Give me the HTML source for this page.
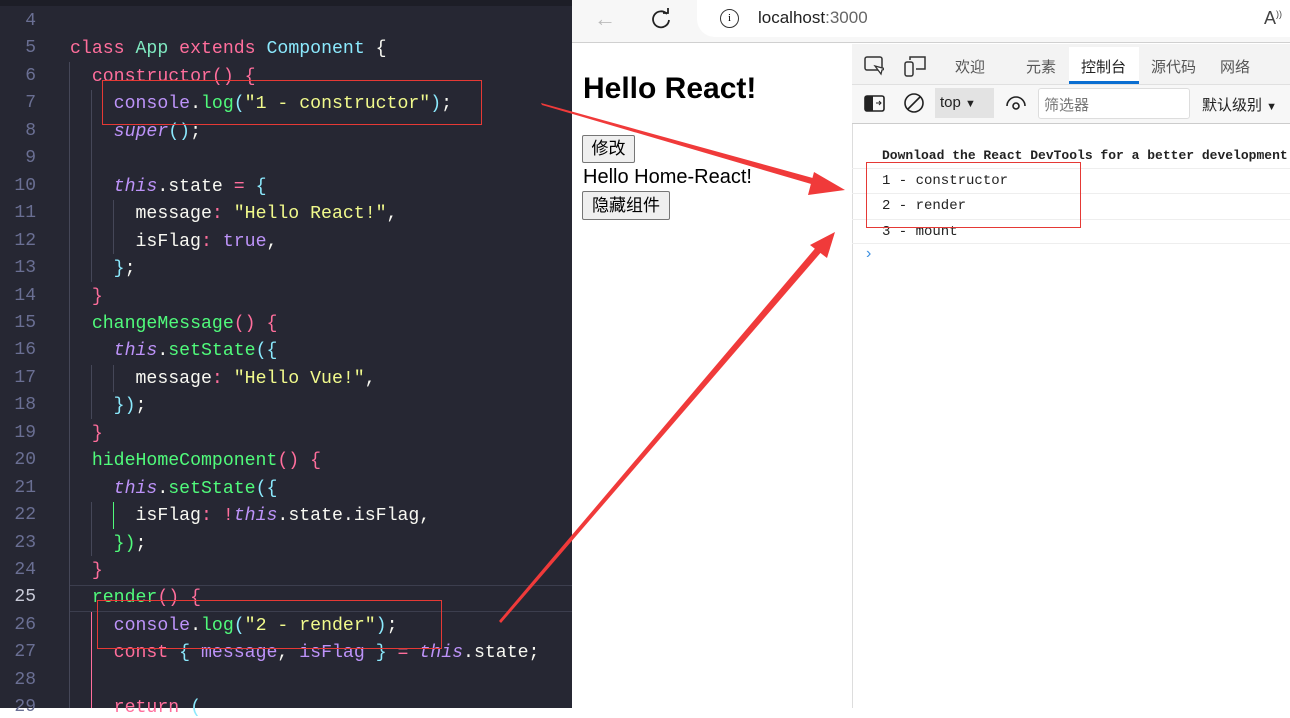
<!DOCTYPE html>
<html><head><meta charset="utf-8"><style>
*{margin:0;padding:0;box-sizing:border-box}
body{width:1290px;height:708px;overflow:hidden;position:relative;background:#fff;font-family:"Liberation Sans","Noto Sans CJK SC",sans-serif}
#ed{position:absolute;left:0;top:0;width:572px;height:708px;background:#262733;overflow:hidden}
#ed .topbar{position:absolute;left:0;top:0;width:572px;height:6px;background:#1d1e27}
.ln{position:absolute;left:0;width:36px;text-align:right;color:#6a6f93;font:18px "Liberation Mono",monospace;}
.cd{position:absolute;left:70px;white-space:pre;color:#f8f8f2;font:18.2px "Liberation Mono",monospace;}
.k{color:#ff6e9c}.c{color:#8be9fd}.g{color:#50fa7b}.y{color:#f1fa8c}.p{color:#bd93f9}.i{color:#bd93f9;font-style:italic}.w{color:#f8f8f2}
.guide{position:absolute;width:1px;background:#454758}
</style></head><body>
<div id="ed"><div class="topbar"></div>
<div style="position:absolute;left:70px;top:585px;width:502px;height:27px;border-top:1px solid #3c3e4e;border-bottom:1px solid #3c3e4e"></div>
<div class="guide" style="left:69px;top:62px;height:646px"></div>
<div class="guide" style="left:91px;top:90px;height:192px"></div>
<div class="guide" style="left:91px;top:365px;height:54px"></div>
<div class="guide" style="left:91px;top:502px;height:54px"></div>
<div class="guide" style="left:91px;top:612px;height:96px;background:#ff6e9c"></div>
<div class="guide" style="left:113px;top:200px;height:54px"></div>
<div class="guide" style="left:113px;top:365px;height:27px"></div>
<div class="guide" style="left:113px;top:502px;height:27px;background:#50fa7b"></div>
</div>
<div id="code"></div>
<script>
const L=[
[4,''],
[5,'<span class="k">class</span> <span class="g" style="color:#7fe8c0">App</span> <span class="k">extends</span> <span class="c">Component</span> <span class="w">{</span>'],
[6,'  <span class="k">constructor</span><span class="k">()</span> <span class="k">{</span>'],
[7,'    <span class="p">console</span>.<span class="g">log</span><span class="c">(</span><span class="y">"1 - constructor"</span><span class="c">)</span>;'],
[8,'    <span class="i">super</span><span class="c">()</span>;'],
[9,''],
[10,'    <span class="i">this</span>.state <span class="k">=</span> <span class="c">{</span>'],
[11,'      message<span class="k">:</span> <span class="y">"Hello React!"</span>,'],
[12,'      isFlag<span class="k">:</span> <span class="p">true</span>,'],
[13,'    <span class="c">}</span>;'],
[14,'  <span class="k">}</span>'],
[15,'  <span class="g">changeMessage</span><span class="k">()</span> <span class="k">{</span>'],
[16,'    <span class="i">this</span>.<span class="g">setState</span><span class="c">({</span>'],
[17,'      message<span class="k">:</span> <span class="y">"Hello Vue!"</span>,'],
[18,'    <span class="c">})</span>;'],
[19,'  <span class="k">}</span>'],
[20,'  <span class="g">hideHomeComponent</span><span class="k">()</span> <span class="k">{</span>'],
[21,'    <span class="i">this</span>.<span class="g">setState</span><span class="c">({</span>'],
[22,'      isFlag<span class="k">:</span> <span class="k">!</span><span class="i">this</span>.state.isFlag,'],
[23,'    <span class="g">})</span>;'],
[24,'  <span class="k">}</span>'],
[25,'  <span class="g">render</span><span class="k">()</span> <span class="k">{</span>'],
[26,'    <span class="p">console</span>.<span class="g">log</span><span class="c">(</span><span class="y">"2 - render"</span><span class="c">)</span>;'],
[27,'    <span class="k">const</span> <span class="c">{</span> <span class="p">message</span>, <span class="p">isFlag</span> <span class="c">}</span> <span class="k">=</span> <span class="i">this</span>.state;'],
[28,''],
[29,'    <span class="k">return</span> <span class="c">(</span>']];
let h='';
for(const [n,s] of L){const t=7+(n-4)*27.45;
h+=`<div class="ln" style="top:${t+4}px;${n==25?'color:#c8cad8':''}">${n}</div><div class="cd" style="top:${t+5}px">${s}</div>`;}
document.getElementById('code').innerHTML=h;
</script>
<!-- browser -->
<div style="position:absolute;left:572px;top:0;width:718px;height:43px;background:#f7f7f7;border-bottom:1px solid #d0d0d0"></div>
<div style="position:absolute;left:594px;top:6px;font-size:22px;color:#bbb">←</div>
<svg style="position:absolute;left:650px;top:8px" width="22" height="22" viewBox="0 0 22 22"><path d="M17 6A8 8 0 1 0 19 12" fill="none" stroke="#222" stroke-width="1.8"/><path d="M13 5h5V0" fill="none" stroke="#222" stroke-width="1.8"/></svg>
<div style="position:absolute;left:697px;top:0;width:600px;height:37px;background:#fff;border-radius:0 0 0 18px"></div>
<div style="position:absolute;left:720px;top:9px;width:19px;height:19px;border:1.5px solid #333;border-radius:50%;font:11px 'Liberation Serif';text-align:center;line-height:16px">i</div>
<div style="position:absolute;left:758px;top:8px;font-size:17px;color:#222">localhost<span style="color:#666">:3000</span></div>
<div style="position:absolute;left:1264px;top:8px;font-size:18px;color:#444">A<sup style="font-size:9px">))</sup></div>
<!-- page -->
<div style="position:absolute;left:583px;top:72px;font-size:30px;font-weight:bold">Hello React!</div>
<div style="position:absolute;left:582px;top:135px;width:53px;height:28px;border:1px solid #767676;background:#efefef;border-radius:2px;font-size:17px;text-align:center;line-height:26px">修改</div>
<div style="position:absolute;left:583px;top:166px;font-size:20px">Hello Home-React!</div>
<div style="position:absolute;left:582px;top:191px;width:88px;height:29px;border:1px solid #767676;background:#efefef;border-radius:2px;font-size:17px;text-align:center;line-height:27px">隐藏组件</div>
<!-- devtools -->
<div style="position:absolute;left:852px;top:44px;width:438px;height:664px;background:#fff;border-left:1px solid #ddd"></div>
<div style="position:absolute;left:852px;top:44px;width:438px;height:40px;background:#f3f3f3"></div>
<svg style="position:absolute;left:864px;top:56px" width="20" height="20"><rect x="1" y="1" width="17" height="13" rx="2" fill="none" stroke="#333" stroke-width="1.5"/><path d="M11 10l6 8l1-4l4-1z" fill="#fff" stroke="#333" stroke-width="1.3"/></svg>
<svg style="position:absolute;left:904px;top:55px" width="22" height="22"><rect x="1" y="7" width="8" height="14" rx="2" fill="none" stroke="#333" stroke-width="1.5"/><path d="M6 5V2h15v12h-9" fill="none" stroke="#333" stroke-width="1.5"/></svg>
<div style="position:absolute;left:955px;top:56px;font-size:15px;color:#555">欢迎</div>
<div style="position:absolute;left:1026px;top:56px;font-size:15px;color:#555">元素</div>
<div style="position:absolute;left:1069px;top:47px;width:70px;height:37px;background:#fff;border-bottom:3px solid #0a6ed1"></div>
<div style="position:absolute;left:1081px;top:56px;font-size:15px;color:#222">控制台</div>
<div style="position:absolute;left:1151px;top:56px;font-size:15px;color:#555">源代码</div>
<div style="position:absolute;left:1220px;top:56px;font-size:15px;color:#555">网络</div>
<div style="position:absolute;left:852px;top:84px;width:438px;height:40px;background:#f7f7f7;border-top:1px solid #e0e0e0;border-bottom:1px solid #ccc"></div>
<svg style="position:absolute;left:864px;top:94px" width="22" height="20"><rect x="1" y="2" width="19" height="15" rx="2" fill="none" stroke="#222" stroke-width="1.6"/><rect x="1" y="2" width="8" height="15" fill="#222"/><path d="M12 9h5M15 7l2 2-2 2" stroke="#222" fill="none"/></svg>
<svg style="position:absolute;left:903px;top:92px" width="22" height="22"><circle cx="11" cy="11" r="9" fill="none" stroke="#222" stroke-width="1.6"/><path d="M5 17L17 5" stroke="#222" stroke-width="1.6"/></svg>
<div style="position:absolute;left:935px;top:88px;width:59px;height:30px;background:#e3e3e3"></div>
<div style="position:absolute;left:940px;top:94px;font-size:15px;color:#222">top <span style="font-size:11px">▼</span></div>
<svg style="position:absolute;left:1005px;top:94px" width="22" height="18"><path d="M2 12a9 9 0 0 1 18 0" fill="none" stroke="#222" stroke-width="1.6"/><circle cx="11" cy="12" r="3" fill="none" stroke="#222" stroke-width="1.6"/></svg>
<div style="position:absolute;left:1038px;top:88px;width:152px;height:31px;background:#fff;border:1px solid #ddd;border-radius:3px"></div>
<div style="position:absolute;left:1044px;top:94px;font-size:15px;color:#777">筛选器</div>
<div style="position:absolute;left:1202px;top:94px;font-size:15px;color:#222;white-space:nowrap">默认级别 <span style="font-size:11px">▼</span></div>
<div style="position:absolute;left:882px;top:148px;font:bold 13px 'Liberation Mono','Noto Sans CJK SC',monospace;white-space:nowrap;color:#222">Download the React DevTools for a better development</div>
<div style="position:absolute;left:852px;top:168px;width:438px;border-top:1px solid #eee"></div>
<div style="position:absolute;left:882px;top:173px;font:14px 'Liberation Mono',monospace;color:#222">1 - constructor</div>
<div style="position:absolute;left:852px;top:193px;width:438px;border-top:1px solid #eee"></div>
<div style="position:absolute;left:882px;top:198px;font:14px 'Liberation Mono',monospace;color:#222">2 - render</div>
<div style="position:absolute;left:852px;top:219px;width:438px;border-top:1px solid #eee"></div>
<div style="position:absolute;left:882px;top:224px;font:14px 'Liberation Mono',monospace;color:#222">3 - mount</div>
<div style="position:absolute;left:852px;top:243px;width:438px;border-top:1px solid #eee"></div>
<div style="position:absolute;left:866px;top:245px;font-size:16px;color:#3b8fe0">›</div>
<!-- annotation boxes -->
<div style="position:absolute;left:102px;top:80px;width:380px;height:45px;border:1.5px solid #e53935"></div>
<div style="position:absolute;left:97px;top:600px;width:345px;height:49px;border:1.5px solid #e53935"></div>
<div style="position:absolute;left:866px;top:162px;width:215px;height:66px;border:1.5px solid #e53935"></div>
<svg style="position:absolute;left:0;top:0" width="1290" height="708">
<path d="M541 103L542 105L818 186L820 180Z" fill="#f03a3a"/>
<path d="M845 190L814 172L808 195Z" fill="#f03a3a"/>
<path d="M499 621L501 623L823 250L818 245Z" fill="#f03a3a"/>
<path d="M835 232L810 245L827 258Z" fill="#f03a3a"/>
</svg>
</body></html>
